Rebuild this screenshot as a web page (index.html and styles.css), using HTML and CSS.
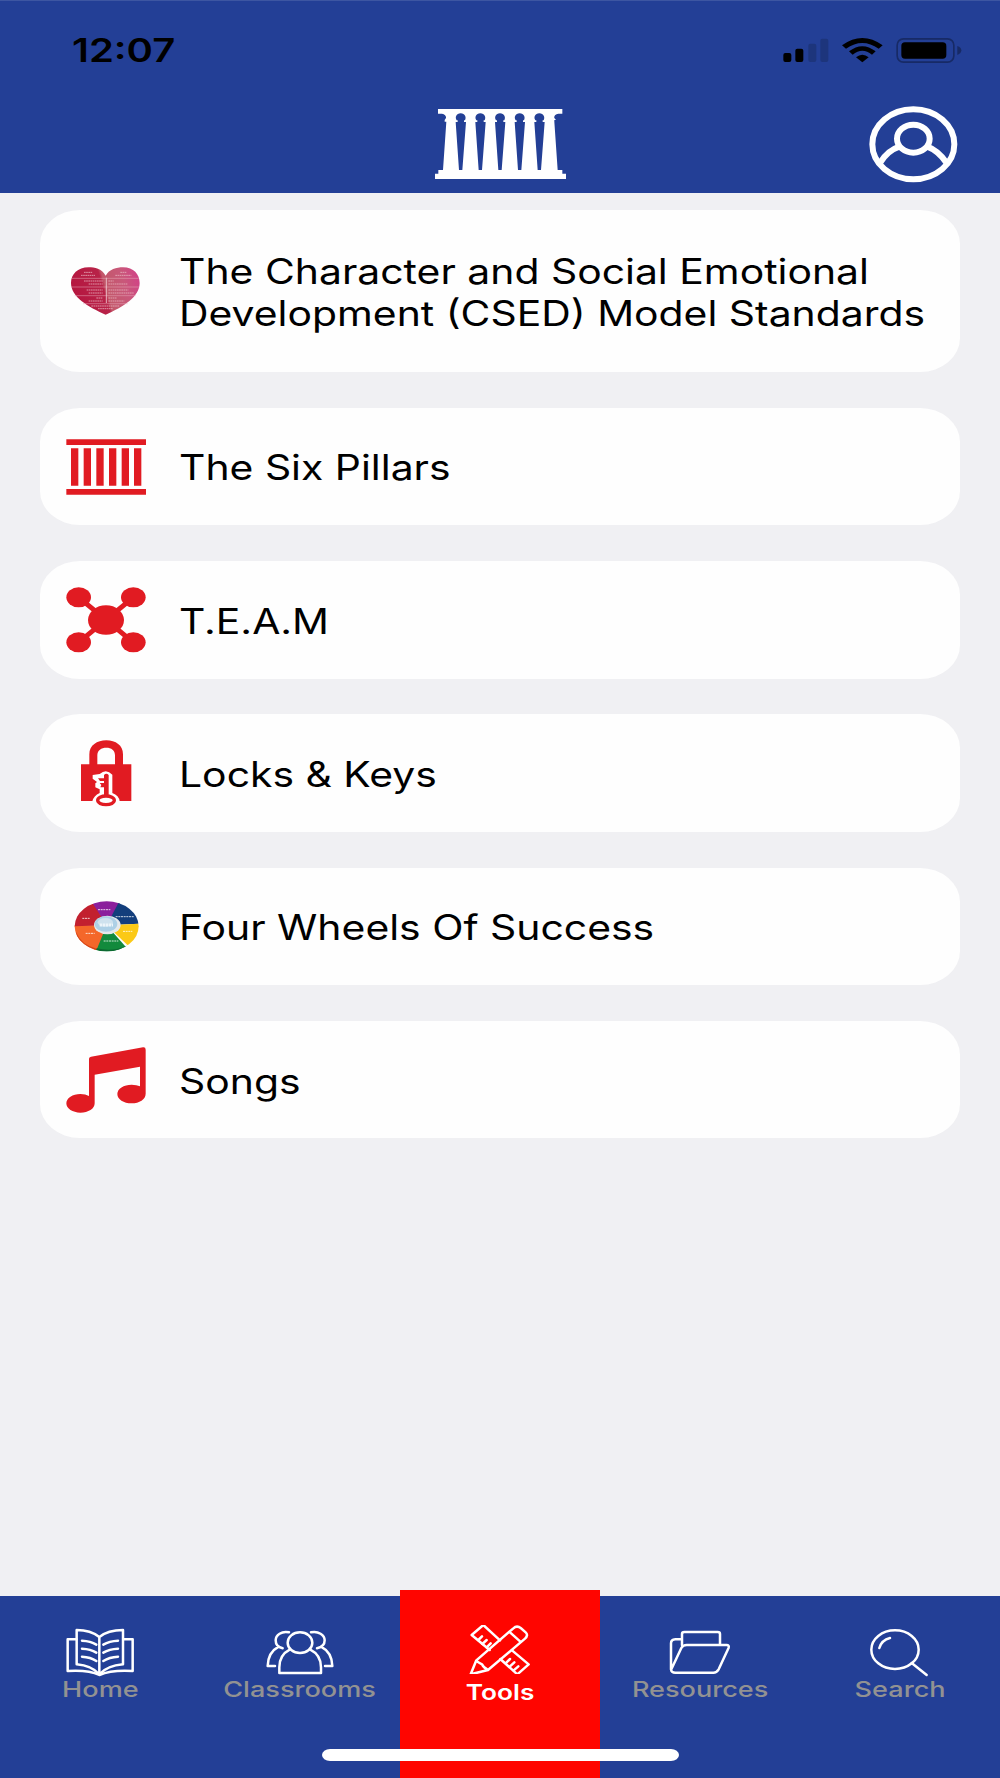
FILE: index.html
```
<!DOCTYPE html>
<html lang="en">
<head>
    <meta charset="UTF-8">
    <meta name="viewport" content="width=device-width, initial-scale=1.0">
    <title>Tools</title>
    <link rel="stylesheet" href="styles.css">
</head>
<body>
    <header class="header">
        <div class="status-bar">
            <span class="time">12:07</span>
            <div class="status-icons">
                <svg width="46" height="25" viewBox="71 54 138 75">
                    <rect x="72" y="99" width="24" height="27" rx="6"/>
                    <rect x="108" y="86" width="24" height="40" rx="6"/>
                    <rect class="dim" x="147" y="71" width="24" height="55" rx="6"/>
                    <rect class="dim" x="183" y="56" width="24" height="70" rx="6"/>
                </svg>
                <svg width="41" height="25" viewBox="248 54 123 75">
                    <path d="M248 76Q309 32 370 76L358 86Q309 52 260 86Z"/>
                    <path d="M269 94Q309 63 349 94L338 104Q309 81 280 104Z"/>
                    <path d="M290 112Q309 96 328 112L309 127Z"/>
                </svg>
                <svg width="66" height="25" viewBox="410 54 198 75">
                    <rect class="battery-shell" x="413.500" y="56.500" width="170" height="70" rx="19"/>
                    <rect x="426" y="67" width="135" height="49" rx="11"/>
                    <path class="battery-tip" d="M594 78Q606 82 606 91T594 105Z"/>
                </svg>
            </div>
        </div>
        <div class="title-bar">
            <svg class="logo" width="131" height="70" viewBox="44 57 393 210">
                <path fill="#fff" d="M53 57H426V71H414Q400 74 402 84L407 90H402V95L412 240H426V251H437V267H44V251H54V240H68L78 95H73V90L77 84Q78 74 65 71H53Z"/>
                <g fill="#233f96">
                    <path id="gap" d="M106 96H112V91H109C103 82 108 70 121 70S139 82 134 91H131V96H137L126 240H116Z"/>
                    <use href="#gap" x="59"/>
                    <use href="#gap" x="118"/>
                    <use href="#gap" x="177"/>
                    <use href="#gap" x="236"/>
                </g>
            </svg>
            <svg class="profile" width="89" height="77" viewBox="327 257 267 231">
                <ellipse cx="460" cy="372" rx="123" ry="105"/>
                <ellipse cx="460" cy="355" rx="49" ry="42"/>
                <path d="M360 428Q382 391 418 379M502 379Q535 391 560 428"/>
            </svg>
        </div>
    </header>

    <main class="list">
        <a class="card card-tall">
            <svg class="card-icon" viewBox="109 173 240 200">
                <defs>
                    <linearGradient id="rose" x1="0" x2="1" y1="0.600" y2="0.400">
                        <stop offset="0" stop-color="#b5153f"/>
                        <stop offset="0.480" stop-color="#b82348"/>
                        <stop offset="0.520" stop-color="#c2586a"/>
                        <stop offset="0.800" stop-color="#c9587a"/>
                        <stop offset="1" stop-color="#d04585"/>
                    </linearGradient>
                </defs>
                <path fill="url(#rose)" d="M228 226C216 205 195 201 177 201C144 201 124 222 124 248C124 290 176 320 228 343C280 320 330 290 330 248C330 222 312 201 280 201C260 201 239 207 228 226Z"/>
                <path stroke="#e6a9b8" stroke-width="1.500" d="M127 234H327M125 260H329M135 286H318M160 310H294"/>
                <path stroke="#f0cdd5" stroke-width="2.500" d="M230 232V308"/>
                <path stroke="#e9b3c0" stroke-width="3" stroke-dasharray="5 1.500" d="M163 216H188M154 225H196M272 216H290M257 225H305M163 242H219M177 251H219M236 242H252M236 251H293M171 269H219M177 278H219M236 269H296M236 278H312M200 293H219M177 302H219M236 293H262M236 302H284M185 317H270M205 325H250" opacity="0.800"/>
            </svg>
            <span class="card-title">The Character and Social Emotional<br>Development (CSED) Model Standards</span>
        </a>
        <a class="card">
            <svg class="card-icon" viewBox="49 40 240 200" fill="#e11b22">
                <path d="M50 56H290V73H50ZM50 205H290V222H50ZM64 83H86V195H64ZM102 83H124V195H102ZM140 83H162V195H140ZM178 83H200V195H178ZM216 83H238V195H216ZM253 83H275V195H253Z"/>
            </svg>
            <span class="card-title">The Six Pillars</span>
        </a>
        <a class="card">
            <svg class="card-icon" viewBox="49 49 240 200" fill="#e11b22">
                <path stroke="#e11b22" stroke-width="15" d="M87 80L251 215M251 80L87 215"/>
                <ellipse cx="169" cy="148" rx="54" ry="44"/>
                <ellipse cx="87" cy="80" rx="37" ry="30"/>
                <ellipse cx="251" cy="80" rx="37" ry="30"/>
                <ellipse cx="87" cy="215" rx="37" ry="30"/>
                <ellipse cx="251" cy="215" rx="37" ry="30"/>
            </svg>
            <span class="card-title">T.E.A.M</span>
        </a>
        <a class="card">
            <svg class="card-icon" viewBox="19 44 240 200">
                <path fill="#e11b22" d="M64 117H89V87C89 60 112 45 140 45S190 60 190 87V117H215V227H64ZM113 117H166V90C166 75 155 67 140 67S113 75 113 90Z"/>
                <path fill="#fff" d="M120 146Q140 128 158 148V203Q178 210 180 228H98Q102 211 120 203V192L107 186V174L112 170L99 160V149Z"/>
                <ellipse cx="139" cy="225" rx="34" ry="20" fill="#fff"/>
                <ellipse cx="139" cy="225" rx="25" ry="13" fill="none" stroke="#e11b22" stroke-width="10"/>
                <path fill="#e11b22" d="M133 149Q140 142 147 149V212H133V186H122L125 179L120 173H133V167H121L115 159H133Z"/>
            </svg>
            <span class="card-title">Locks &amp; Keys</span>
        </a>
        <a class="card">
            <svg class="card-icon" viewBox="19 23 240 200">
                <clipPath id="wheel"><ellipse cx="141" cy="123" rx="96" ry="75"/></clipPath>
                <g clip-path="url(#wheel)">
                    <path fill="#8b1f9c" d="M141 120L85 40H190Z"/>
                    <path fill="#133e7c" d="M141 120L183 40H250V115Z"/>
                    <path fill="#fbc916" d="M141 120L250 115V190H215Z"/>
                    <path fill="#128a3c" d="M141 120L212 200H102Z"/>
                    <path fill="#f4672a" d="M141 120L106 205H30V120Z"/>
                    <path fill="#c2202f" d="M141 120L30 123V40H90Z"/>
                    <path fill="none" stroke="#d54316" stroke-width="6" d="M47 142Q62 181 110 193"/>
                    <path fill="none" stroke="#0c6931" stroke-width="6" d="M110 192Q160 204 202 184"/>
                </g>
                <ellipse cx="143" cy="119" rx="40" ry="28" fill="#e5e9ec"/>
                <ellipse cx="139" cy="116" rx="34" ry="23" fill="#add0e6"/>
                <ellipse cx="137" cy="111" rx="23" ry="13" fill="#cfe2ee"/>
                <path stroke="#fff" stroke-width="3" stroke-dasharray="6 2" opacity="0.800" d="M115 73H152M168 94H222M68 99H90M190 138H218M78 144H105M132 167H176"/>
                <path stroke="#edf5fa" stroke-width="9" stroke-dasharray="7 2" d="M120 119H160"/>
            </svg>
            <span class="card-title">Four Wheels Of Success</span>
        </a>
        <a class="card">
            <svg class="card-icon" viewBox="49 78 240 200">
                <path fill="#e11b22" d="M118 113Q118 108 124 107L280 79Q288 78 288 86V218C288 235 269 247 246 247C222 247 203 235 203 219C203 203 222 191 246 191Q261 191 271 196V137L135 161V247C135 264 116 275 92 275C69 275 50 263 50 247C50 231 69 219 92 219Q108 219 118 225Z"/>
            </svg>
            <span class="card-title">Songs</span>
        </a>
    </main>

    <nav class="tab-bar">
        <a class="tab">
            <svg class="tab-icon" viewBox="198 144 204 147">
                <path d="M229 178H203V273Q265 269 298 285Q335 269 398 273V178H370"/>
                <path d="M298 171Q272 150 230 150V253Q275 257 298 283Q322 257 369 253V150Q324 150 298 171V283"/>
                <path d="M246 182Q272 183 289 194M246 206Q272 207 289 218M246 230Q272 231 289 243M354 182Q328 183 310 194M354 206Q328 207 310 218M354 230Q328 231 310 243"/>
            </svg>
            <span class="tab-label">Home</span>
        </a>
        <a class="tab">
            <svg class="tab-icon" viewBox="798 144 204 147">
                <ellipse cx="900" cy="188" rx="37" ry="31"/>
                <path d="M869 209Q838 225 838 262V279H963V262Q963 225 931 209"/>
                <path d="M867 157C845 152 827 165 827 181C827 194 834 202 848 205M836 200Q804 217 803 258H825M933 157C955 152 974 165 974 181C974 194 965 202 951 205M963 200Q996 217 997 258H975"/>
            </svg>
            <span class="tab-label">Classrooms</span>
        </a>
        <a class="tab active">
            <svg class="tab-icon" viewBox="228 136 204 147">
                <path d="M330 182L280 136L245 166L299 211M366 212L416 254L382 284L331 238"/>
                <path d="M265 181L276 170M277 193L290 181M290 203L302 191M349 249L360 238M360 260L373 248M371 272L385 260"/>
                <path d="M242 284L259 242L370 146Q381 136 393 146L407 158Q416 166 405 177L294 271ZM259 244Q270 251 276 254Q281 265 292 269M360 158L391 186"/>
            </svg>
            <span class="tab-label">Tools</span>
        </a>
        <a class="tab">
            <svg class="tab-icon" viewBox="198 144 204 147">
                <path d="M246 196V162Q246 156 253 156H353Q360 156 360 162V194"/>
                <path d="M244 178H226Q213 179 213 190V268Q214 278 226 278H340Q350 278 356 268L386 203Q388 195 380 195H260Q249 195 244 204L214 268"/>
            </svg>
            <span class="tab-label">Resources</span>
        </a>
        <a class="tab">
            <svg class="tab-icon" viewBox="798 144 204 147">
                <ellipse cx="885" cy="209" rx="71" ry="58"/>
                <path d="M935 249L980 285M838 204Q845 180 870 174"/>
            </svg>
            <span class="tab-label">Search</span>
        </a>
        <div class="home-indicator"></div>
    </nav>
</body>
</html>
```
FILE: styles.css
```
* {
    box-sizing: border-box;
}

body {
    font-family: Inter, "Liberation Sans", sans-serif;
    margin: 0;
    height: 1778px;
    display: flex;
    flex-direction: column;
    background: #f0f0f3;
    color: #000;
    overflow: hidden;
}

svg {
    display: block;
}

/* header */
.header {
    height: 193px;
    background: #233f96;
    box-shadow: inset 0 1px rgba(255, 255, 255, 0.12);
}

.status-bar {
    height: 95px;
    padding: 6px 38px 0 72px;
    display: flex;
    align-items: center;
    justify-content: space-between;
}

.time {
    font-size: 32px;
    font-weight: 600;
    transform: scaleX(1.25);
    transform-origin: left;
}

.status-icons {
    display: flex;
    gap: 13px;
}

.dim {
    fill: #1d357c;
}

.battery-shell {
    fill: none;
    stroke: #172a66;
    stroke-width: 5;
}

.battery-tip {
    fill: #172a66;
}

.title-bar {
    height: 98px;
    padding: 0 42px;
    display: grid;
    grid-template-columns: 1fr auto 1fr;
    align-items: center;
}

.logo {
    grid-column: 2;
}

.profile {
    justify-self: end;
    fill: none;
    stroke: #fff;
    stroke-width: 18;
}

/* cards */
.list {
    flex: 1;
    padding: 17px 40px 0;
    display: flex;
    flex-direction: column;
    gap: 35.7px;
}

.card {
    height: 117.6px;
    padding: 1px 0 0 26px;
    display: flex;
    align-items: center;
    gap: 33px;
    background: #fefefe;
    border-radius: 40px / 34px;
}

.card-tall {
    height: 162px;
}

.card-icon {
    width: 80px;
    height: 66.7px;
}

.card-title {
    padding-top: 1px;
    font-size: 35px;
    line-height: 42px;
    white-space: nowrap;
    transform: scaleX(1.168);
    transform-origin: left;
}

/* bottom tabs */
.tab-bar {
    position: relative;
    height: 182px;
    display: flex;
    background: #233f96;
}

.tab {
    width: 200px;
    padding-top: 32px;
    display: flex;
    flex-direction: column;
    align-items: center;
    color: #929292;
}

.tab-icon {
    width: 68px;
    height: 49px;
    fill: none;
    stroke: #fff;
    stroke-width: 7.5;
    stroke-linecap: round;
    stroke-linejoin: round;
}

.tab-label {
    margin-top: -1px;
    font-size: 21.5px;
    line-height: 26px;
    font-weight: 500;
    transform: scaleX(1.26);
}

.active {
    margin-top: -6px;
    padding-top: 35px;
    background: #ff0500;
    color: #fff;
}

.active .tab-label {
    margin-top: 5px;
    font-weight: 600;
    transform: scaleX(1.22);
}

.home-indicator {
    position: absolute;
    left: 322px;
    bottom: 17px;
    width: 357px;
    height: 12px;
    border-radius: 8px / 6px;
    background: #fff;
}
```
